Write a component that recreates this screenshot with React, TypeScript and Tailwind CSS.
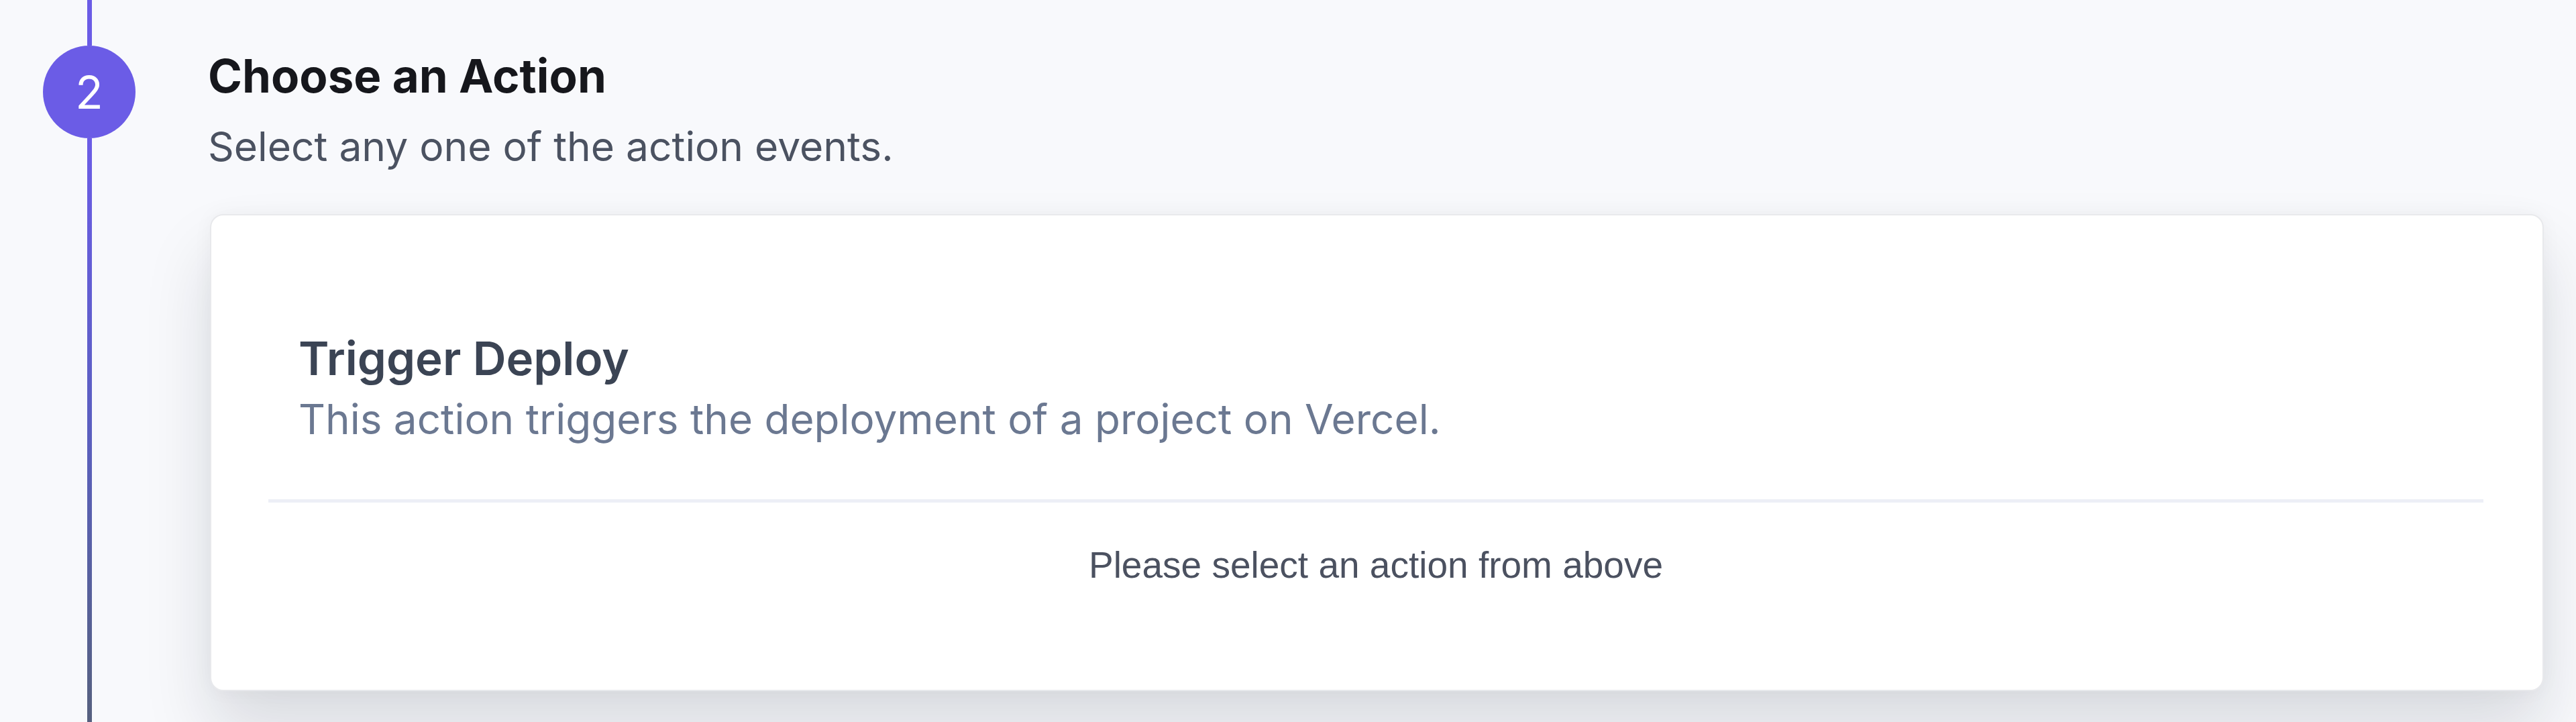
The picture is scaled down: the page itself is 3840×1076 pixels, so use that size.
import React from "react";

const sans = { fontFamily: "Inter, 'Noto Sans', 'Liberation Sans', sans-serif" };
const arial = { fontFamily: "'Liberation Sans', Arial, sans-serif" };

function StepRail() {
  return (
    <div className="flex w-[266px] shrink-0 flex-col items-center">
      <div className="h-[68px] w-[7px] bg-[#6b5ce6]" />
      <div className="flex h-[138px] w-[138px] shrink-0 items-center justify-center rounded-full bg-[#6b5ce6] text-[68px] leading-none font-normal text-white">
        2
      </div>
      <div className="w-[7px] flex-1 bg-gradient-to-b from-[#6b5ce6] via-[#5b5fc0] to-[#56607f]" />
    </div>
  );
}

function ActionCard() {
  return (
    <div className="ml-[3px] rounded-[20px] border-2 border-[#e8e9ec] bg-white pt-[173px] pb-[153px] pr-[88px] pl-[85px] shadow-[0_60px_100px_rgba(17,24,39,0.13),0_0_30px_rgba(17,24,39,0.04)]">
      <div className="pl-[45px]">
        <div className="text-[69px] leading-[80px] font-semibold text-[#3b4454]">Trigger Deploy</div>
        <div className="mt-[14px] text-[62px] leading-[74px] text-[#6b7891]">
          This action triggers the deployment of a project on Vercel.
        </div>
      </div>
      <div className="mt-[82px] h-[5px] bg-[#edeff6]" />
      <div style={arial} className="mt-[60px] text-center text-[55px] leading-[66px] text-[#4b5160]">
        Please select an action from above
      </div>
    </div>
  );
}

export default function App() {
  return (
    <div style={sans} className="flex h-[1076px] w-full overflow-hidden bg-[#f8f9fc]">
      <StepRail />
      <div className="flex-1 pl-[44px] pr-[48px]">
        <h2 className="mt-[72px] text-[69px] leading-[82px] font-bold text-[#16171c]">Choose an Action</h2>
        <p className="mt-[28px] text-[60.5px] leading-[72px] text-[#4b5261]">Select any one of the action events.</p>
        <div className="mt-[65px]">
          <ActionCard />
        </div>
      </div>
    </div>
  );
}
